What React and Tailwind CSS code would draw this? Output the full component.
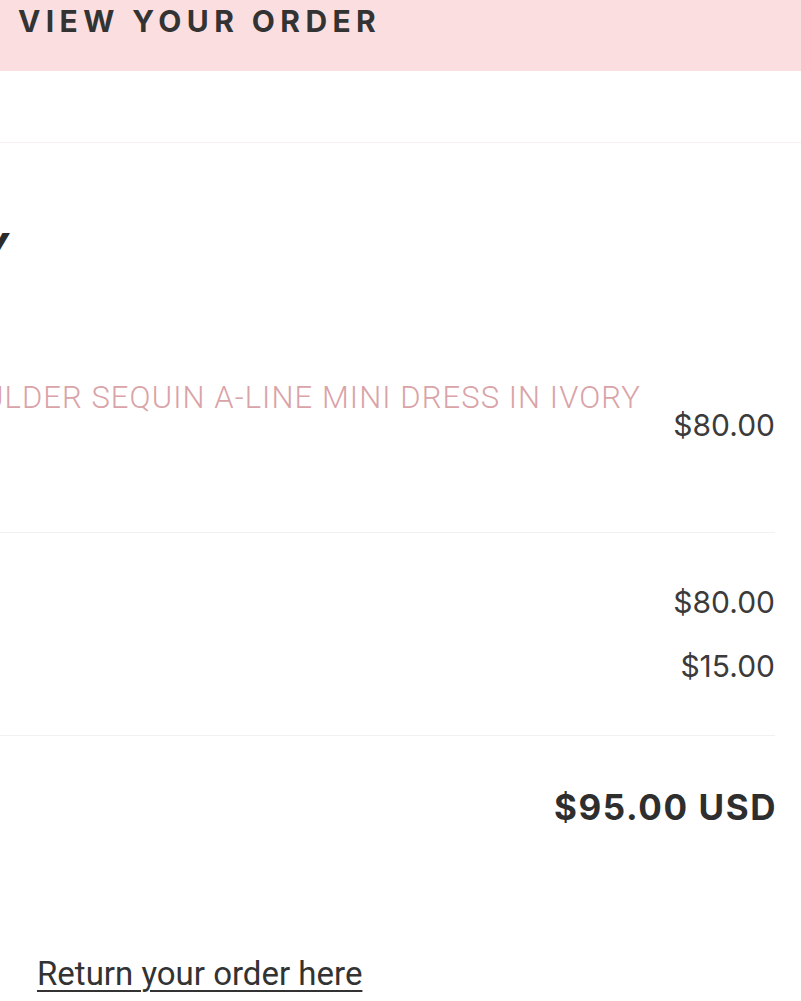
export default function App() {
  return (
    <div className="w-[801px] h-[1001px] overflow-hidden bg-white relative">
      <header className="h-[71px] bg-[#fbdfe0] pl-[18px] pt-[6px]">
        <h1 className="font-['Inter',sans-serif] font-bold text-[30px] leading-none tracking-[0.18em] text-[#333]">
          VIEW YOUR ORDER
        </h1>
      </header>
      <div className="h-[72px] border-b border-[#fbeeee]"></div>

      <div className="pr-[26px]">
        <div className="w-[13px] flex justify-end mt-[84px]">
          <h2 className="whitespace-nowrap font-['Inter',sans-serif] font-bold text-[43px] leading-none tracking-[0.05em] text-[#2b2b2b]">
            ORDER SUMMARY
          </h2>
        </div>

        <div className="flex items-start justify-between mt-[112px] pb-[92px] border-b border-[#f1f1f1]">
          <div className="w-[641px] flex justify-end">
            <span className="whitespace-nowrap font-['Roboto',sans-serif] font-light text-[31px] leading-none tracking-[0.035em] text-[#d9a3a8]">
              OFF THE SHOULDER SEQUIN A-LINE MINI DRESS IN IVORY
            </span>
          </div>
          <span className="mt-[28px] font-['Inter',sans-serif] text-[30px] leading-none text-[#3b3b3b]">$80.00</span>
        </div>

        <div className="flex flex-col items-end gap-[34px] pt-[54px] pb-[54px] border-b border-[#f1f1f1] font-['Inter',sans-serif] text-[30px] leading-none text-[#3b3b3b]">
          <span>$80.00</span>
          <span>$15.00</span>
        </div>

        <div className="flex justify-end pt-[54px]">
          <span className="font-['Inter',sans-serif] font-bold text-[35px] leading-none tracking-[0.045em] mr-[-2px] text-[#2e2e2e]">$95.00 USD</span>
        </div>
      </div>

      <div className="pl-[37px] mt-[132px]">
        <a href="#" className="font-['Roboto',sans-serif] text-[33px] leading-none text-[#333] underline underline-offset-[5px] decoration-[2px]">
          Return your order here
        </a>
      </div>
    </div>
  );
}
